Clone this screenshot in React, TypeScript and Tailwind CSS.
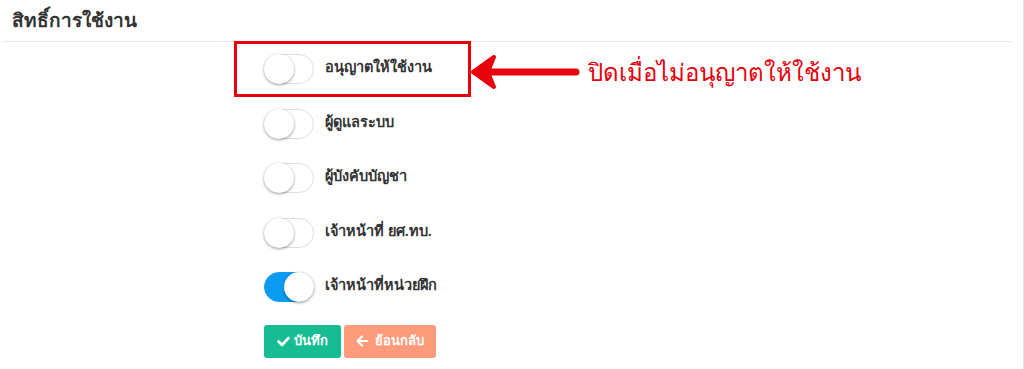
import React from "react";

const roles = [
  { label: "อนุญาตให้ใช้งาน", on: false },
  { label: "ผู้ดูแลระบบ", on: false },
  { label: "ผู้บังคับบัญชา", on: false },
  { label: "เจ้าหน้าที่ ยศ.ทบ.", on: false },
  { label: "เจ้าหน้าที่หน่วยฝึก", on: true },
];

function Toggle({ on }: { on: boolean }) {
  return (
    <div
      className={
        on
          ? "flex justify-end w-[50px] h-[30px] rounded-full bg-[#0c9bf2] border border-[#0c9bf2]"
          : "flex justify-start w-[50px] h-[30px] rounded-full bg-white border border-[#dfdfdf]"
      }
    >
      <div className="-m-px w-[30px] h-[30px] shrink-0 rounded-full bg-white shadow-[0_1px_3px_rgba(0,0,0,0.4)]" />
    </div>
  );
}

export default function App() {
  return (
    <div
      className="relative w-[1024px] h-[369px] bg-white border-r border-[#e5e5e5] overflow-hidden"
      style={{ fontFamily: '"Noto Sans", "DejaVu Sans", Tahoma, sans-serif' }}
    >
      <div className="mx-[3px] mr-[11px] h-[42px] border-b border-[#e8e8e8] flex items-center pl-[9px]">
        <span className="text-[19px] font-bold text-[#333]">สิทธิ์การใช้งาน</span>
      </div>
      <div className="pl-[264px]">
        {roles.map((r) => (
          <div key={r.label} className="h-[54.5px] flex items-center gap-[11px]">
            <Toggle on={r.on} />
            <span className="pb-[4px] text-[14.5px] font-semibold text-[#333]">{r.label}</span>
          </div>
        ))}
        <div className="mt-[10px] flex gap-[3px]">
          <button className="h-[33px] w-[77px] rounded-[3px] bg-[#17bd92] text-white text-[13px] font-bold flex items-center justify-center gap-[4px]">
            <svg width="13" height="11" viewBox="0 0 13 11">
              <path d="M1.5 5.5 L5 9 L11.5 2" fill="none" stroke="white" strokeWidth="2.6" strokeLinecap="round" strokeLinejoin="round" />
            </svg>
            บันทึก
          </button>
          <button className="h-[33px] w-[92px] rounded-[3px] bg-[#fd9b7b] text-white text-[13px] font-bold flex items-center justify-center gap-[7px]">
            <svg width="12" height="12" viewBox="0 0 12 12">
              <path d="M11 6 H2 M6 1.5 L1.5 6 L6 10.5" fill="none" stroke="white" strokeWidth="2.2" strokeLinecap="round" strokeLinejoin="round" />
            </svg>
            ย้อนกลับ
          </button>
        </div>
      </div>

      {/* annotation overlay */}
      <div className="absolute left-[234px] top-[41px] w-[237px] h-[56px] border-[3px] border-[#e8000b]" />
      <div className="absolute left-[470px] top-[52px] flex items-center gap-[6px]">
        <svg width="112" height="40" viewBox="0 0 112 40">
          <path d="M6 20 H106" stroke="#e8000b" strokeWidth="7" strokeLinecap="round" />
          <path d="M3 20 L24 5 L18 20 L24 35 Z" fill="#e8000b" stroke="#e8000b" strokeWidth="4" strokeLinejoin="round" />
        </svg>
        <span className="text-[24px] leading-[34px] text-[#e8000b]">ปิดเมื่อไม่อนุญาตให้ใช้งาน</span>
      </div>
    </div>
  );
}
